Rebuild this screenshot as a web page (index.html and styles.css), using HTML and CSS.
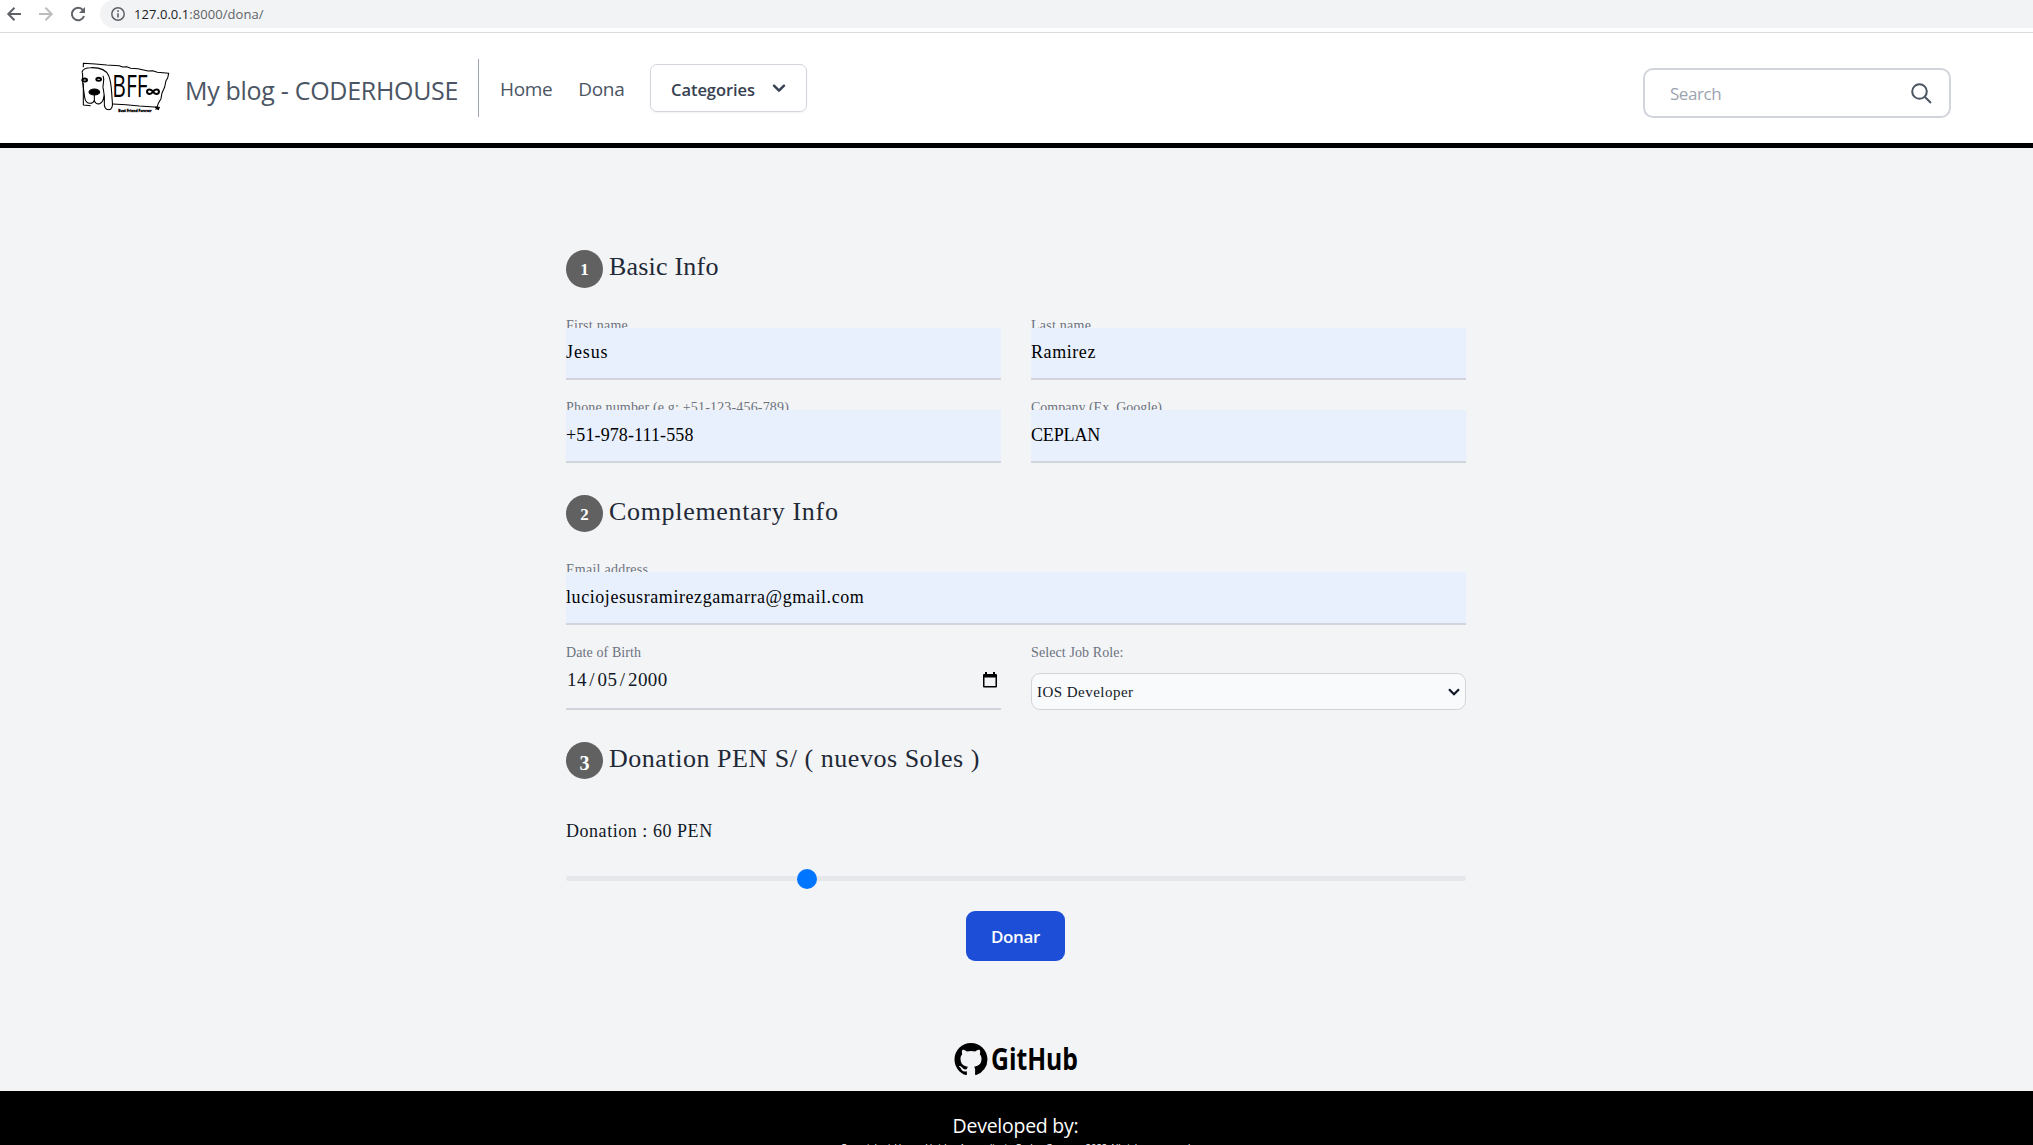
FILE: index.html
```
<!DOCTYPE html>
<html lang="en">
<head>
<meta charset="utf-8">
<title>Dona</title>
<link rel="stylesheet" href="styles.css">
</head>
<body>
<div class="browser-bar">
  <svg class="browser-icons" width="100" height="28" viewBox="0 0 100 28" fill="none" stroke-width="2">
    <path d="M21 14H8.500M14.500 7.800L8.300 14l6.200 6.200" stroke="#5f6368"/>
    <path d="M39 14h12.500M45.500 7.800L51.700 14l-6.200 6.200" stroke="#babcbe"/>
    <path d="M83 10.200A6.200 6.200 0 1 0 84 16" stroke="#5f6368"/>
    <path d="M85 7v6h-6z" fill="#5f6368"/>
  </svg>
  <div class="address">
    <svg width="14" height="14" viewBox="0 0 14 14" fill="none" stroke="#5f6368"><circle cx="7" cy="7" r="6.200" stroke-width="1.500"/><path d="M7 6.200v4.300M7 3.300v1.600" stroke-width="1.600"/></svg>
    <span class="url"><b>127.0.0.1</b>:8000/dona/</span>
  </div>
</div>

<header class="nav">
  <svg class="logo" width="92" height="55" viewBox="30 30 276 165" fill="none" stroke="#000" stroke-width="3.200" stroke-linejoin="round">
    <path d="M40 52V40l36 2 34 3 38 2 10 4 12-1 12 5 22 1 30 7 14-1 14 5 34 3-3 14-5 8-4 19-8 18-3 17-8 14-5 15-3 4M40 100v65l22 2M128 162l40 2 40 4 56 4"/>
    <path d="M36 66c2-8 12-13 26-13 26-1 46 6 54 24 10 24 8 50 11 78 2 14-2 24-11 24-10 0-14-8-13-22 2-20-2-32-4-44-1-12 6-24 0-36M36 66c6 10-1 20 2 32 2 14 4 30 6 44 2 12 8 18 16 18 6 0 11-3 13-9 2 8 8 12 16 10 8-3 12-12 13-24M73 134v18"/>
    <ellipse cx="73" cy="126" rx="16" ry="9" fill="#000"/>
    <ellipse cx="44" cy="90" rx="7" ry="4.500" stroke-width="6"/>
    <ellipse cx="86" cy="88" rx="7" ry="4.500" stroke-width="6"/>
    <text class="logo-name" x="127" y="140" textLength="106" lengthAdjust="spacingAndGlyphs">BFF</text>
    <path d="M249 125c-5-8-17-9-18 0 1 10 13 8 18 0 5-8 17-9 18 0-1 10-13 8-18 0z" stroke-width="6"/>
    <text class="logo-tag" x="145" y="185" textLength="100" lengthAdjust="spacingAndGlyphs">Best Friend Forever</text>
    <path d="M256 172l9 7 3-7z" fill="#000"/>
  </svg>
  <div class="brand">My blog - CODERHOUSE</div>
  <nav class="links">
    <a>Home</a>
    <a>Dona</a>
  </nav>
  <div class="categories">
    <span>Categories</span>
    <svg width="14" height="9" viewBox="0 0 14 9" fill="none" stroke="#374151" stroke-width="2.400" stroke-linecap="round" stroke-linejoin="round"><path d="M2 1.700l5 5 5-5"/></svg>
  </div>
  <div class="search">
    <span>Search</span>
    <svg width="21" height="21" viewBox="0 0 21 21" fill="none" stroke="#4b5563" stroke-width="2"><circle cx="8.500" cy="8.500" r="7.300"/><path d="M13.700 13.700l6.300 6.300"/></svg>
  </div>
</header>

<main class="form">
  <h2 class="step"><span class="num">1</span><span class="t1">Basic Info</span></h2>
  <div class="row">
    <div class="field"><label>First name</label><div class="value jesus">Jesus</div></div>
    <div class="field"><label>Last name</label><div class="value">Ramirez</div></div>
  </div>
  <div class="row">
    <div class="field"><label class="phone-label">Phone number (e.g: +51-123-456-789)</label><div class="value tall phone">+51-978-111-558</div></div>
    <div class="field"><label class="company-label">Company (Ex. Google)</label><div class="value tall company">CEPLAN</div></div>
  </div>

  <h2 class="step next"><span class="num">2</span><span class="t2">Complementary Info</span></h2>
  <div class="row">
    <div class="field"><label>Email address</label><div class="value tall">luciojesusramirezgamarra@gmail.com</div></div>
  </div>
  <div class="row">
    <div class="field full-label"><label>Date of Birth</label>
      <div class="date"><span>14<i>/</i>05<i>/</i>2000</span>
        <svg width="14" height="16" viewBox="0 0 14 16"><path d="M2 0h2v2h6V0h2v2h1q1 0 1 1v11.500q0 1-1 1H1q-1 0-1-1V3q0-1 1-1h1zM1.500 5.500v8.500h11V5.500z" fill="#000" fill-rule="evenodd"/></svg>
      </div>
    </div>
    <div class="field full-label"><label>Select Job Role:</label>
      <div class="select"><span>IOS Developer</span>
        <svg width="12" height="8" viewBox="0 0 12 8" fill="none" stroke="#111827" stroke-width="2.200"><path d="M1 1.200l5 5 5-5"/></svg>
      </div>
    </div>
  </div>

  <h2 class="step next"><span class="num low">3</span><span class="t3">Donation PEN S/ ( nuevos Soles )</span></h2>
  <div class="amount">Donation : 60 PEN</div>
  <div class="slider"><div class="thumb"></div></div>
  <button class="donate">Donar</button>
</main>

<div class="github">
  <svg width="125" height="33" viewBox="0 0 125 33">
    <path transform="translate(0.500 0) scale(2.060)" d="M8 0C3.580 0 0 3.580 0 8c0 3.540 2.290 6.530 5.470 7.590.4.070.55-.17.55-.38 0-.19-.01-.82-.01-1.490-2.010.37-2.530-.49-2.690-.94-.09-.23-.48-.94-.82-1.130-.28-.15-.68-.52-.01-.53.63-.01 1.080.58 1.230.82.72 1.210 1.870.87 2.330.66.07-.52.28-.87.51-1.070-1.780-.2-3.640-.89-3.640-3.950 0-.87.31-1.590.82-2.150-.08-.2-.36-1.020.08-2.120 0 0 .67-.21 2.200.82.64-.18 1.320-.27 2-.27s1.360.09 2 .27c1.530-1.040 2.200-.82 2.200-.82.44 1.100.16 1.920.08 2.120.51.56.82 1.270.82 2.150 0 3.070-1.870 3.750-3.650 3.950.29.25.54.73.54 1.480 0 1.070-.01 1.930-.01 2.200 0 .21.15.46.55.38A8.010 8.010 0 0 0 16 8c0-4.420-3.580-8-8-8z"/>
    <text class="github-name" x="37" y="27" textLength="87" lengthAdjust="spacingAndGlyphs">GitHub</text>
  </svg>
</div>

<footer class="footer">
  <div class="dev">Developed by:</div>
  <div class="copy">Copyright | House Unidos Aprendizaje Carlos Guzman 2022 All rights reserved</div>
</footer>
</body>
</html>
```
FILE: styles.css
```
* { box-sizing: border-box; }
body {
  margin: 0;
  height: 1145px;
  overflow: hidden;
  background: #f3f4f6;
  font-family: "Open Sans", sans-serif;
}
svg { display: block; flex: none; }

.browser-bar {
  display: flex;
  height: 33px;
  background: #fff;
  border-bottom: 1px solid #dadce0;
}
.address {
  display: flex;
  flex: 1;
  align-items: center;
  gap: 9px;
  height: 28px;
  padding-left: 11px;
  border-radius: 14px 0 0 14px;
  background: #f1f3f4;
}
.url { font-size: 13px; letter-spacing: 0.05px; line-height: 28px; color: #5f6368; }
.url b { font-weight: 400; color: #202124; }

.nav {
  display: flex;
  align-items: flex-start;
  height: 115px;
  padding: 26px 82px 0 80px;
  background: #fff;
  border-bottom: 5px solid #000;
}
.logo { margin-top: 1px; }
.brand {
  width: 294px;
  height: 58px;
  margin-left: 13px;
  border-right: 1px solid #9ca3af;
  font-size: 25px;
  letter-spacing: -0.3px;
  line-height: 62px;
  color: #4b5563;
  white-space: nowrap;
}
.links {
  display: flex;
  gap: 26px;
  width: 171px;
  padding-left: 21px;
  font-size: 19px;
  letter-spacing: -0.35px;
  line-height: 61px;
  color: #4b5563;
}
.categories {
  display: flex;
  align-items: center;
  justify-content: space-between;
  width: 157px;
  height: 48px;
  margin-top: 5px;
  padding: 0 20px;
  border: 1px solid #d1d5db;
  border-radius: 7px;
  box-shadow: 0 1px 2px rgba(0, 0, 0, .05);
  font-size: 16.500px;
  font-weight: 600;
  letter-spacing: -0.05px;
  color: #374151;
}
.categories span { padding-top: 3px; }
.search {
  display: flex;
  align-items: center;
  justify-content: space-between;
  width: 308px;
  height: 50px;
  margin: 9px 0 0 auto;
  padding: 0 17px 0 25px;
  border: 2px solid #d1d5db;
  border-radius: 10px;
  font-size: 17px;
  letter-spacing: -0.45px;
  color: #9ca3af;
}
.search span { padding-top: 1px; }

.form {
  width: 900px;
  margin: 102px 0 0 566px;
  font-family: "Liberation Serif", serif;
}
.step {
  display: flex;
  gap: 6px;
  height: 38px;
  margin: 0 0 24px;
  font-size: 26px;
  font-weight: 400;
  line-height: 34px;
  color: #1f2937;
  white-space: nowrap;
}
.step.next { height: 37px; margin-top: 32px; }
.t1 { letter-spacing: 0.2px; }
.t2 { letter-spacing: 0.68px; }
.t3 { letter-spacing: 0.53px; }
.num {
  width: 37px;
  height: 100%;
  border-radius: 50%;
  background: #616161;
  color: #fff;
  font-size: 17px;
  font-weight: 700;
  line-height: 39px;
  text-align: center;
}
.low { font-size: 20px; line-height: 43px; }

.row { display: flex; gap: 30px; }
.row + .row { margin-top: 14px; }
.field { flex: 1; }
.field label {
  display: block;
  height: 16px;
  overflow: hidden;
  font-size: 14px;
  letter-spacing: 0.25px;
  line-height: 27px;
  color: #6b7280;
}
.full-label label { height: 27px; letter-spacing: 0.1px; }
.field .phone-label { letter-spacing: 0.17px; }
.field .company-label { letter-spacing: 0; }
.value {
  height: 52px;
  border-bottom: 2px solid #d1d5db;
  background: #e8f0fe;
  font-size: 18px;
  letter-spacing: 0.57px;
  line-height: 48px;
  color: #000;
}
.tall { height: 53px; line-height: 50px; }
.jesus { letter-spacing: 0.9px; }
.phone { letter-spacing: 0.12px; }
.company { letter-spacing: -0.15px; }
.date {
  display: flex;
  justify-content: space-between;
  height: 44px;
  padding: 0 4px 0 1px;
  border-bottom: 2px solid #d1d5db;
  font-size: 19px;
  letter-spacing: 0.400px;
  line-height: 28px;
  color: #111827;
}
.date i { margin: 0 2.500px; font-style: normal; }
.date svg { margin-top: 6px; }
.select {
  display: flex;
  align-items: center;
  justify-content: space-between;
  height: 37px;
  margin-top: 7px;
  padding: 0 5px;
  border: 1px solid #d1d5db;
  border-radius: 9px;
  background: #f9fafb;
  font-size: 15px;
  letter-spacing: 0.47px;
  line-height: 36px;
  color: #111827;
}

.amount {
  margin-top: 32px;
  font-size: 18px;
  letter-spacing: 0.54px;
  line-height: 40px;
  color: #111827;
}
.slider {
  position: relative;
  height: 5px;
  margin-top: 25px;
  border-radius: 3px;
  background: #e5e7eb;
}
.thumb {
  position: absolute;
  top: -7px;
  left: 231px;
  width: 20px;
  height: 20px;
  border-radius: 50%;
  background: #0075ff;
}
.donate {
  display: block;
  width: 99px;
  height: 50px;
  margin: 30px 0 0 400px;
  padding: 1px 0 0;
  border: 0;
  border-radius: 9px;
  background: #1d4ed8;
  color: #fff;
  font: 600 17px "Open Sans", sans-serif;
  letter-spacing: -0.35px;
}

.github { margin: 82px 0 15px 954px; }
.github-name { font: 700 30px "Open Sans", sans-serif; }
.logo-name { font: 400 92px "Open Sans", sans-serif; fill: #000; stroke: none; }
.logo-tag { font: 700 11px "Open Sans", sans-serif; fill: #000; stroke: #000; stroke-width: 1px; }

.footer {
  height: 54px;
  padding-right: 2px;
  overflow: hidden;
  background: #000;
  color: #fff;
  text-align: center;
}
.dev {
  height: 50px;
  font-size: 19.500px;
  letter-spacing: -0.25px;
  line-height: 69px;
}
.copy { font-size: 9.600px; line-height: 14px; }
```
